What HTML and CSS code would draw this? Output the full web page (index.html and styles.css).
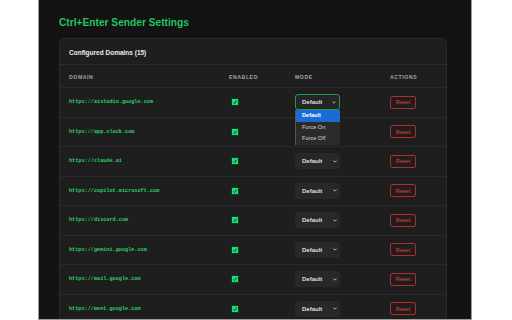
FILE: index.html
```html
<!DOCTYPE html>
<html lang="en">
<head>
  <meta charset="UTF-8">
  <meta name="viewport" content="width=device-width, initial-scale=1.0">
  <title>Ctrl+Enter Sender Settings</title>
  <link rel="stylesheet" href="styles.css">
</head>
<body>
  <div class="window">
    <h1>Ctrl+Enter Sender Settings</h1>

    <section class="card">
      <div class="card-header">Configured Domains (15)</div>

      <div class="row head">
        <div>Domain</div>
        <div>Enabled</div>
        <div>Mode</div>
        <div>Actions</div>
      </div>

      <!-- Primera fila: selector abierto -->
      <div class="row">
        <div class="domain">https://aistudio.google.com</div>
        <div><span class="check"><svg width="8" height="8" viewBox="0 0 8 8"><rect x="0.5" y="0.5" width="7" height="7" rx="1" fill="#1fdc74" stroke="#0c3a1e"/><path d="M2.6 4.6 L3.6 5.5 L5.6 2.7" fill="none" stroke="#0b2414" stroke-width="0.9"/></svg></span></div>
        <div class="mode-cell">
          <div class="select focused">Default<svg class="chev" width="4" height="3" viewBox="0 0 4 3"><path d="M0.4 0.6 L2 2.2 L3.6 0.6" fill="none" stroke="#ddd" stroke-width="0.8"/></svg></div>
          <ul class="menu">
            <li class="active">Default</li>
            <li>Force On</li>
            <li>Force Off</li>
          </ul>
        </div>
        <div><button class="reset">Reset</button></div>
      </div>

      <div class="row">
        <div class="domain">https://app.slack.com</div>
        <div><span class="check"><svg width="8" height="8" viewBox="0 0 8 8"><rect x="0.5" y="0.5" width="7" height="7" rx="1" fill="#1fdc74" stroke="#0c3a1e"/><path d="M2.6 4.6 L3.6 5.5 L5.6 2.7" fill="none" stroke="#0b2414" stroke-width="0.9"/></svg></span></div>
        <div class="mode-cell"></div>
        <div><button class="reset">Reset</button></div>
      </div>

      <div class="row">
        <div class="domain">https://claude.ai</div>
        <div><span class="check"><svg width="8" height="8" viewBox="0 0 8 8"><rect x="0.5" y="0.5" width="7" height="7" rx="1" fill="#1fdc74" stroke="#0c3a1e"/><path d="M2.6 4.6 L3.6 5.5 L5.6 2.7" fill="none" stroke="#0b2414" stroke-width="0.9"/></svg></span></div>
        <div class="mode-cell"><div class="select">Default<svg class="chev" width="4" height="3" viewBox="0 0 4 3"><path d="M0.4 0.6 L2 2.2 L3.6 0.6" fill="none" stroke="#ddd" stroke-width="0.8"/></svg></div></div>
        <div><button class="reset">Reset</button></div>
      </div>

      <div class="row">
        <div class="domain">https://copilot.microsoft.com</div>
        <div><span class="check"><svg width="8" height="8" viewBox="0 0 8 8"><rect x="0.5" y="0.5" width="7" height="7" rx="1" fill="#1fdc74" stroke="#0c3a1e"/><path d="M2.6 4.6 L3.6 5.5 L5.6 2.7" fill="none" stroke="#0b2414" stroke-width="0.9"/></svg></span></div>
        <div class="mode-cell"><div class="select">Default<svg class="chev" width="4" height="3" viewBox="0 0 4 3"><path d="M0.4 0.6 L2 2.2 L3.6 0.6" fill="none" stroke="#ddd" stroke-width="0.8"/></svg></div></div>
        <div><button class="reset">Reset</button></div>
      </div>

      <div class="row">
        <div class="domain">https://discord.com</div>
        <div><span class="check"><svg width="8" height="8" viewBox="0 0 8 8"><rect x="0.5" y="0.5" width="7" height="7" rx="1" fill="#1fdc74" stroke="#0c3a1e"/><path d="M2.6 4.6 L3.6 5.5 L5.6 2.7" fill="none" stroke="#0b2414" stroke-width="0.9"/></svg></span></div>
        <div class="mode-cell"><div class="select">Default<svg class="chev" width="4" height="3" viewBox="0 0 4 3"><path d="M0.4 0.6 L2 2.2 L3.6 0.6" fill="none" stroke="#ddd" stroke-width="0.8"/></svg></div></div>
        <div><button class="reset">Reset</button></div>
      </div>

      <div class="row">
        <div class="domain">https://gemini.google.com</div>
        <div><span class="check"><svg width="8" height="8" viewBox="0 0 8 8"><rect x="0.5" y="0.5" width="7" height="7" rx="1" fill="#1fdc74" stroke="#0c3a1e"/><path d="M2.6 4.6 L3.6 5.5 L5.6 2.7" fill="none" stroke="#0b2414" stroke-width="0.9"/></svg></span></div>
        <div class="mode-cell"><div class="select">Default<svg class="chev" width="4" height="3" viewBox="0 0 4 3"><path d="M0.4 0.6 L2 2.2 L3.6 0.6" fill="none" stroke="#ddd" stroke-width="0.8"/></svg></div></div>
        <div><button class="reset">Reset</button></div>
      </div>

      <div class="row">
        <div class="domain">https://mail.google.com</div>
        <div><span class="check"><svg width="8" height="8" viewBox="0 0 8 8"><rect x="0.5" y="0.5" width="7" height="7" rx="1" fill="#1fdc74" stroke="#0c3a1e"/><path d="M2.6 4.6 L3.6 5.5 L5.6 2.7" fill="none" stroke="#0b2414" stroke-width="0.9"/></svg></span></div>
        <div class="mode-cell"><div class="select">Default<svg class="chev" width="4" height="3" viewBox="0 0 4 3"><path d="M0.4 0.6 L2 2.2 L3.6 0.6" fill="none" stroke="#ddd" stroke-width="0.8"/></svg></div></div>
        <div><button class="reset">Reset</button></div>
      </div>

      <div class="row">
        <div class="domain">https://meet.google.com</div>
        <div><span class="check"><svg width="8" height="8" viewBox="0 0 8 8"><rect x="0.5" y="0.5" width="7" height="7" rx="1" fill="#1fdc74" stroke="#0c3a1e"/><path d="M2.6 4.6 L3.6 5.5 L5.6 2.7" fill="none" stroke="#0b2414" stroke-width="0.9"/></svg></span></div>
        <div class="mode-cell"><div class="select">Default<svg class="chev" width="4" height="3" viewBox="0 0 4 3"><path d="M0.4 0.6 L2 2.2 L3.6 0.6" fill="none" stroke="#ddd" stroke-width="0.8"/></svg></div></div>
        <div><button class="reset">Reset</button></div>
      </div>
    </section>
  </div>
</body>
</html>
```

FILE: styles.css
```css
/* General */
* {
  margin: 0;
  padding: 0;
  box-sizing: border-box;
}

body {
  background-color: #fff;
  font-family: "Liberation Sans", Arial, sans-serif;
  height: 320px;
  overflow: hidden;
}

/* Ventana oscura */
.window {
  margin-left: 38px;
  width: 434px;
  height: 320px;
  background-color: #131313;
  border: 1px solid #9c9c9c;
  border-top: none;
  padding: 17px 0 0 20px;
  overflow: hidden;
}

h1 {
  font-size: 10.2px;
  line-height: 12px;
  font-weight: bold;
  color: #22c55e;
}

/* Tarjeta */
.card {
  margin-top: 9px;
  width: 388px;
  background-color: #1e1e1e;
  border: 1px solid #2a2a2a;
  border-radius: 6px;
}

.card-header {
  height: 26px;
  display: flex;
  align-items: center;
  padding: 2px 9px 0;
  font-size: 6.5px;
  font-weight: bold;
  color: #ececec;
  border-bottom: 1px solid #2c2c2c;
}

/* Filas */
.row {
  display: grid;
  grid-template-columns: 160px 66px 95px 1fr;
  align-items: center;
  height: 29.5px;
  padding-left: 9px;
  border-bottom: 1px solid #2a2a2a;
}

.row.head {
  height: 23px;
  padding-top: 2px;
  font-size: 5.2px;
  font-weight: bold;
  letter-spacing: 0.55px;
  text-transform: uppercase;
  color: #a3a3a3;
}

.domain {
  font-family: "Liberation Mono", monospace;
  font-size: 5.2px;
  font-weight: bold;
  color: #2bd068;
}

.check {
  display: block;
  width: 8px;
  height: 8px;
  margin-left: 2px;
}

.check svg {
  display: block;
}

/* Selector de modo */
.mode-cell {
  position: relative;
}

.select {
  width: 45px;
  height: 16px;
  display: flex;
  align-items: center;
  justify-content: space-between;
  padding: 0 3px 0 7px;
  background-color: #282828;
  border-radius: 3px;
  font-size: 6px;
  font-weight: bold;
  color: #dedede;
}

.select.focused {
  height: 16px;
  background-color: #252525;
  border: 1px solid #1f9a50;
  padding-left: 6px;
}

.menu {
  position: absolute;
  top: 16px;
  left: 0;
  width: 45px;
  list-style: none;
  background-color: #2b2b2b;
  border-left: 1px solid #555;
  padding-bottom: 1px;
  z-index: 10;
}

.menu li {
  height: 11.3px;
  line-height: 11.3px;
  padding-left: 6px;
  font-size: 5.6px;
  color: #d8d8d8;
}

.menu li.active {
  background-color: #1b6bd6;
  color: #fff;
  font-weight: bold;
}

/* Botón de reinicio */
.reset {
  display: block;
  width: 26px;
  height: 13px;
  background: none;
  border: 1px solid #b22c2c;
  border-radius: 2px;
  font-family: "Liberation Sans", Arial, sans-serif;
  font-size: 5.5px;
  color: #e04444;
  cursor: pointer;
}
```
